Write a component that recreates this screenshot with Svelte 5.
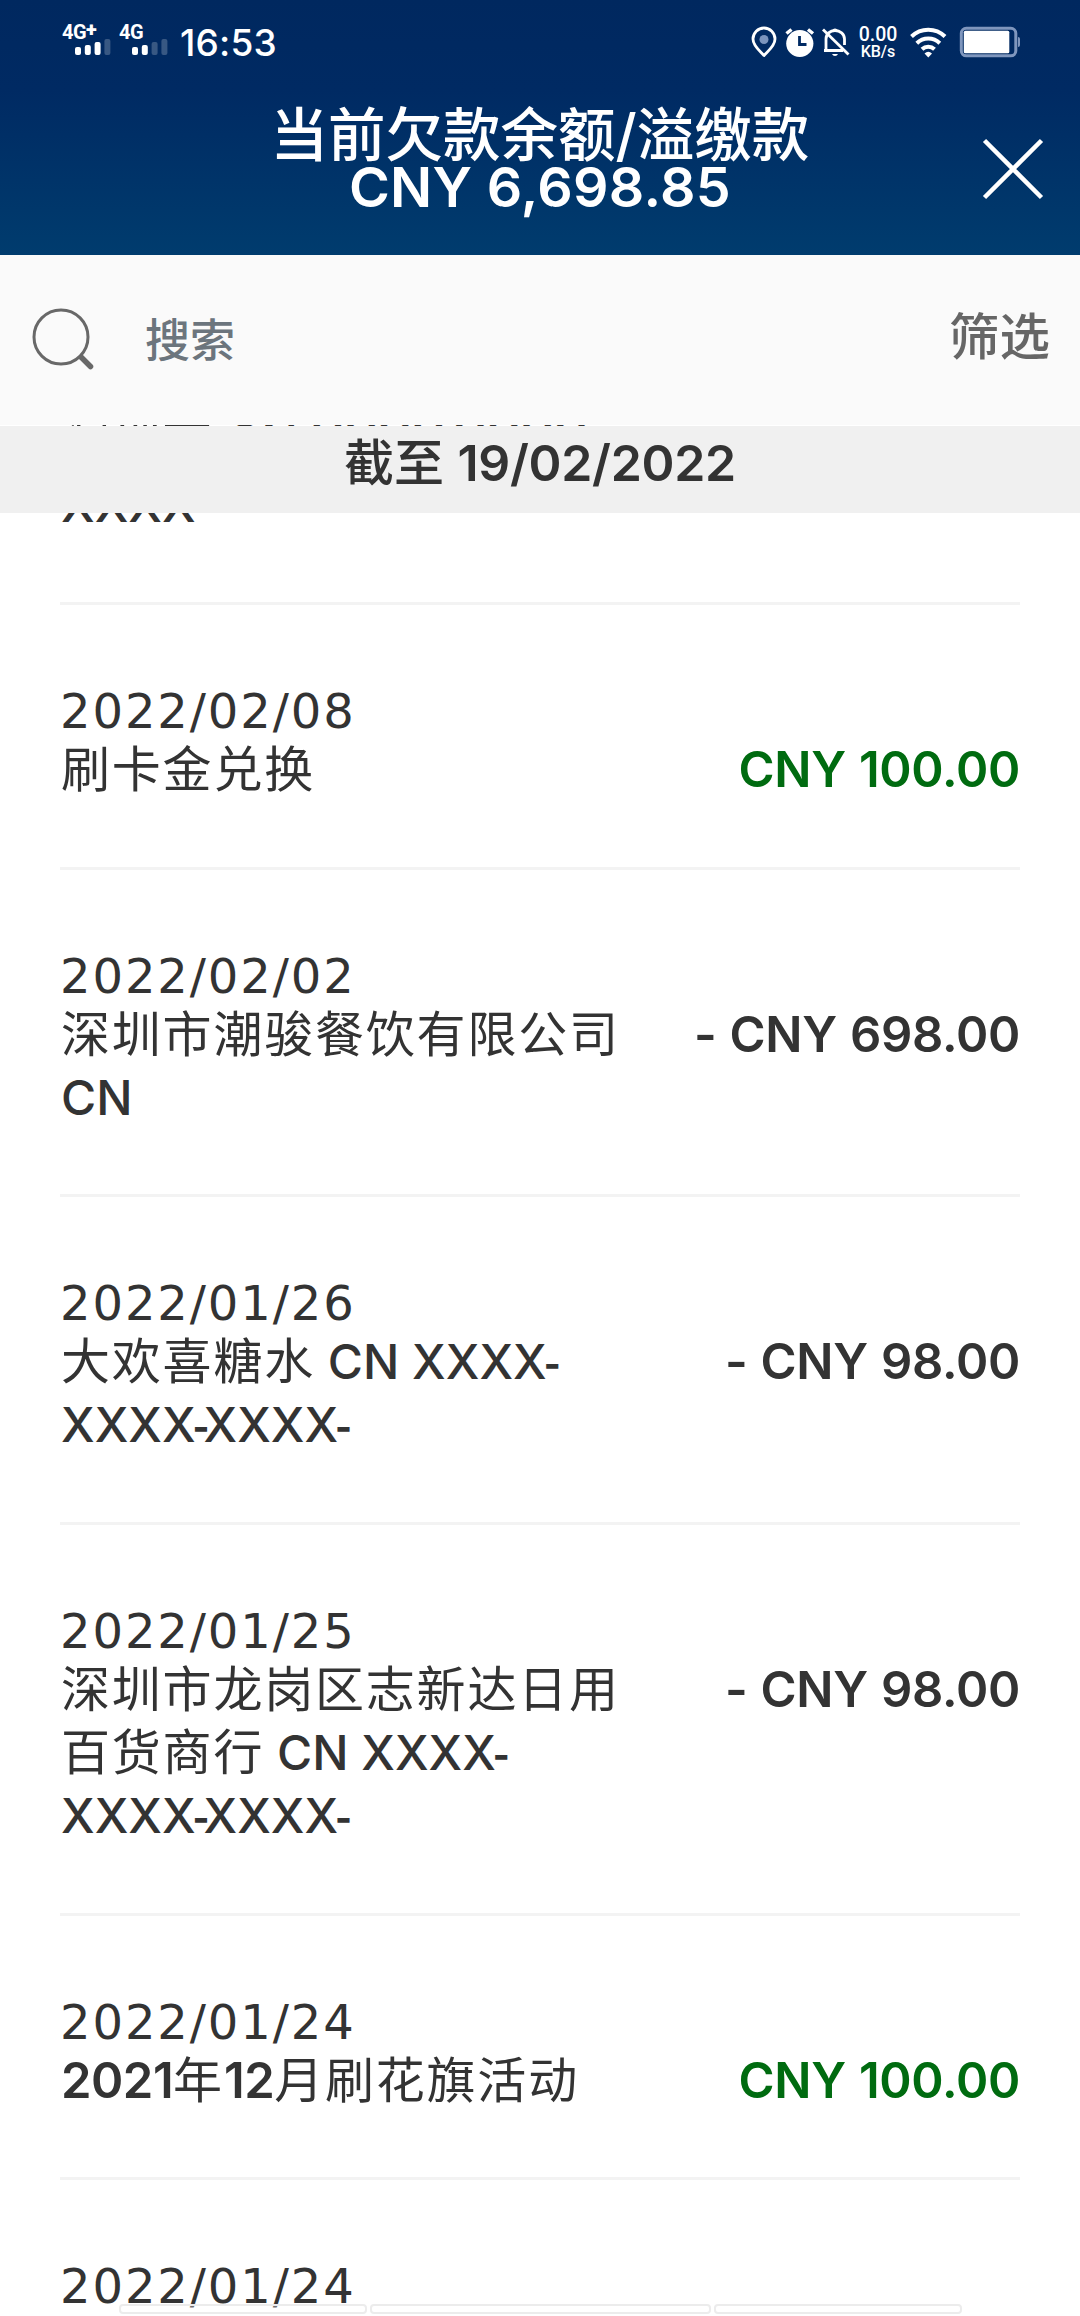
<script>
  let transactions = $state([
    { date: "2022/02/08", text: "刷卡金兑换", amount: "CNY 100.00", credit: true },
    { date: "2022/02/02", text: "深圳市潮骏餐饮有限公司 CN", amount: "- CNY 698.00" },
    { date: "2022/01/26", text: "大欢喜糖水 CN XXXX-XXXX-XXXX-", amount: "- CNY 98.00" },
    { date: "2022/01/25", text: "深圳市龙岗区志新达日用百货商行 CN XXXX-XXXX-XXXX-", amount: "- CNY 98.00" },
    { date: "2022/01/24", text: "2021年12月刷花旗活动", amount: "CNY 100.00", credit: true },
    { date: "2022/01/24", text: "", amount: "" },
  ]);
  let signals = $state([
    { label: "4G", plus: true, bars: 3 },
    { label: "4G", plus: false, bars: 2 },
  ]);

  // split a description into chinese, latin, digit and hyphen runs
  function runs(text) {
    return text.match(/-|\d+|[A-Z ]+|[^-\dA-Z ]+/g) ?? [];
  }

  function kind(run) {
    if (run === "-") return "hyphen";
    if (/\d/.test(run)) return "digits";
    return /[A-Z]/.test(run) ? "latin" : "han";
  }
</script>

<svelte:head>
  <title>当前欠款余额</title>
</svelte:head>

{#snippet desc(text)}
  <div class="desc">{#each runs(text) as run}<span class={kind(run)}>{run}</span>{/each}</div>
{/snippet}

<div class="screen">
  <header>
    <div class="status">
      {#each signals as s}
        <div class="signal">
          <span>{s.label}{#if s.plus}<b>+</b>{/if}</span>
          <svg width="36" height="17" viewBox="0 0 36 17">
            {#each [8, 10, 13, 16] as h, i}
              <rect x={i * 9.8} y={16 - h} width="6" height={h} rx="2" fill="#fff" opacity={i < s.bars ? 1 : 0.22} />
            {/each}
          </svg>
        </div>
      {/each}
      <time>16:53</time>

      <svg class="right" width="105" height="32" viewBox="750 26 105 32">
        <g fill="none" stroke="#fff" stroke-width="2.8">
          <path d="M764 55.500C760 51 753 46 753 39a11 11 0 0 1 22 0c0 7-7 12-11 16.500z" stroke-linejoin="round" />
          <path d="M826 50V39c0-5 4-8.500 9-8.500s9.500 3.500 9.500 8.500v6M824 50.500h19" />
          <path d="M823 29.500l25.500 25" />
          <path d="M786.500 33.500l5-4M808 29.500l5 4" stroke-width="3.500" />
        </g>
        <circle cx="764" cy="39.500" r="4.500" fill="#7b94bd" />
        <circle cx="799.800" cy="43.500" r="13.600" fill="#fff" />
        <path d="M799.500 36v8.500h7" fill="none" stroke="#002a63" stroke-width="2.800" />
        <path d="M832 30.500a3.300 3.300 0 0 1 6 0zM832 54a3.300 3.300 0 0 0 6 0z" fill="#fff" />
      </svg>
      <div class="speed"><span>0.00</span><small>KB/s</small></div>
      <svg class="power" width="115" height="32" viewBox="905 26 115 32">
        <g fill="none" stroke="#fff" stroke-width="4">
          <path d="M911.500 36.500a24 24 0 0 1 33.500 0" />
          <path d="M916.800 43.200a16.500 16.500 0 0 1 23 0" />
          <path d="M922 49.300a9 9 0 0 1 12.500 0" />
        </g>
        <path d="M924.500 53.500q3.700-3.500 7.500 0l-3.700 4z" fill="#fff" />
        <rect x="961.300" y="28.300" width="54.500" height="27.500" rx="5" fill="none" stroke="#7f96bd" stroke-width="3" />
        <rect x="963.800" y="30.800" width="45.500" height="22.500" rx="1.500" fill="#fff" />
        <path d="M1018 37q2 0 2 2v6q0 2-2 2z" fill="#7f96bd" />
      </svg>
    </div>

    <h1>当前欠款余额/溢缴款<br /><strong>CNY 6,698.85</strong></h1>
    <button class="close" aria-label="关闭">
      <svg width="64" height="64" viewBox="0 0 64 64">
        <path d="M3.500 3.500l57 57M60.500 3.500l-57 57" stroke="#fff" stroke-width="4.500" />
      </svg>
    </button>
  </header>

  <div class="search">
    <svg width="64" height="64" viewBox="0 0 64 64" fill="none" stroke="#686868">
      <circle cx="30" cy="30" r="27" stroke-width="3" />
      <path d="M50.500 50.500l9 9" stroke-width="5.500" stroke-linecap="round" />
    </svg>
    <span class="hint">搜索</span>
    <span class="filter">筛选</span>
  </div>

  <main>
    <div class="asof">截至 <b>19/02/2022</b></div>
    <div class="list">
      <div class="item first">
        {@render desc("深圳市 CN XXXX-XXXX-XXXX")}
      </div>
      {#each transactions as t}
        <div class="item">
          <div class="date">{t.date}</div>
          <div class="row">
            {@render desc(t.text)}
            <div class="amount" class:credit={t.credit}>{t.amount}</div>
          </div>
        </div>
      {/each}
    </div>
  </main>

  <div class="tabs"><i></i><i class="mid"></i><i></i></div>
</div>

<style>
  :global(body) {
    background: #fff;
  }

  .screen {
    position: relative;
    width: 1080px;
    height: 2316px;
    overflow: hidden;
    color: #333;
    font-family: Inter, "Noto Sans CJK SC", sans-serif;
  }

  header {
    position: relative;
    height: 255px;
    color: #fff;
    background: linear-gradient(#00285f 0, #002a63 35%, #003c6e 100%);
  }

  .status {
    display: flex;
    height: 86px;
    box-sizing: border-box;
    padding: 24px 60px 0 62px;
  }

  .signal {
    width: 57px;
    font: 700 20px/17px Roboto, sans-serif;
    letter-spacing: -0.5px;
  }

  .signal span {
    display: block;
    height: 15px;
  }

  .signal b {
    position: relative;
    top: -3px;
  }

  .signal svg {
    display: block;
    margin-left: 13px;
  }

  time {
    margin-left: 4px;
    font: 500 37px/37px Inter, sans-serif;
    letter-spacing: 0.2px;
  }

  .right {
    margin: 2px 0 0 auto;
  }

  .speed {
    width: 50px;
    padding: 1px 4px 0 0;
    box-sizing: border-box;
    font-family: Roboto, sans-serif;
    font-weight: 500;
    text-align: center;
  }

  .speed span,
  .speed small {
    display: block;
    font-size: 19.5px;
    line-height: 20px;
  }

  .speed small {
    font-size: 16px;
    line-height: 14px;
  }

  .power {
    margin-top: 2px;
  }

  h1 {
    margin: 0;
    padding-top: 24px;
    font-size: 57.5px;
    font-weight: 500;
    line-height: 51px;
    text-align: center;
  }

  h1 strong {
    font-size: 55.5px;
    font-weight: 600;
    letter-spacing: 0.3px;
  }

  .close {
    position: absolute;
    top: 137px;
    right: 35px;
    padding: 0;
    border: 0;
    background: none;
  }

  .close svg {
    display: block;
  }

  .search {
    display: flex;
    align-items: center;
    height: 170px;
    padding: 0 30px 2px 31px;
    background: #fafafa;
    box-sizing: border-box;
  }

  .hint {
    margin: 0 0 4px 50px;
    color: #6c757d;
    font-size: 45px;
    font-weight: 500;
  }

  .filter {
    margin-left: auto;
    margin-bottom: 12px;
    color: #666;
    font-size: 50.5px;
    font-weight: 500;
  }

  main {
    position: relative;
  }

  .asof {
    position: absolute;
    z-index: 1;
    top: 1px;
    width: 100%;
    height: 87px;
    background: #f0f0f0;
    font-size: 50px;
    font-weight: 500;
    line-height: 74px;
    text-align: center;
  }

  .asof b {
    font-weight: 600;
    letter-spacing: -0.3px;
  }

  .list {
    height: 1891px;
    padding: 0 60px;
    overflow: hidden;
  }

  .item {
    box-sizing: border-box;
    padding: 75px 0 65.7px;
    border-bottom: 3px solid #f3f3f3;
  }

  .first {
    margin-top: -15px;
    padding: 0 0 66px;
  }

  .date {
    height: 58px;
    font-family: "DejaVu Sans", sans-serif;
    font-size: 48px;
    letter-spacing: 1.9px;
    line-height: 62px;
  }

  .row {
    display: flex;
    justify-content: space-between;
  }

  .desc {
    width: 562px;
    min-height: 63px;
    padding-left: 1px;
    font-size: 49px;
    line-height: 63px;
  }

  .han {
    letter-spacing: 1.8px;
  }

  .latin {
    font-size: 48px;
    font-weight: 500;
  }

  .digits {
    font-weight: 600;
    letter-spacing: -0.5px;
  }

  .hyphen {
    position: relative;
    top: -2px;
    margin-left: -3px;
    font-size: 36px;
    font-weight: 800;
    line-height: 1;
    letter-spacing: -6px;
  }

  .amount {
    font-size: 49px;
    font-weight: 600;
    line-height: 64px;
    letter-spacing: -0.3px;
    word-spacing: 1px;
    white-space: nowrap;
    height: 63px;
  }

  .credit {
    color: #006b10;
  }

  .tabs {
    position: absolute;
    left: 119px;
    bottom: 2px;
    display: flex;
    gap: 3px;
  }

  .tabs i {
    width: 248px;
    height: 10px;
    box-sizing: border-box;
    border: 2px solid #ececec;
    border-radius: 4px;
    background: rgba(255, 255, 255, 0.3);
  }

  .tabs .mid {
    width: 341px;
  }
</style>
